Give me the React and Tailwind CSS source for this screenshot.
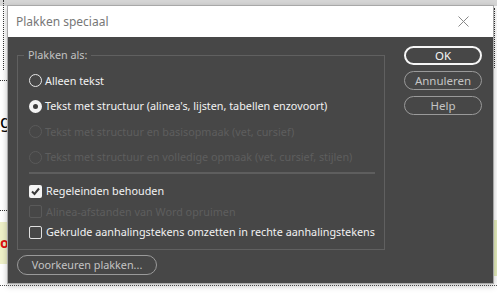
import React from 'react';

function Radio({ label, checked, disabled }) {
  return (
    <div className="flex items-center h-[25.5px] whitespace-nowrap">
      <span
        className={`w-[13px] h-[13px] rounded-full shrink-0 ${
          checked ? 'border-[4px] border-[#f4f4f4] bg-[#3c3c3c]' : disabled ? 'border border-[#5a5a5a]' : 'border-[1.5px] border-[#e8e8e8]'
        }`}
      />
      <span className={`ml-[3px] ${disabled ? 'text-[#5e5e5e]' : 'text-[#f2f2f2]'}`}>{label}</span>
    </div>
  );
}

function Check({ label, checked, disabled }) {
  return (
    <div className="flex items-center h-[20.5px] whitespace-nowrap">
      <span
        className={`w-[13px] h-[13px] rounded-[2px] shrink-0 flex items-center justify-center ${
          checked ? 'bg-[#f4f4f4]' : disabled ? 'border border-[#5a5a5a]' : 'border border-[#e0e0e0]'
        }`}
      >
        {checked && (
          <svg width="11" height="11" viewBox="0 0 11 11">
            <path d="M2 5.5 L4.5 8 L9 2.5" fill="none" stroke="#3a3a3a" strokeWidth="2" />
          </svg>
        )}
      </span>
      <span className={`ml-[4px] ${disabled ? 'text-[#5e5e5e]' : 'text-[#f2f2f2]'}`}>{label}</span>
    </div>
  );
}

function Btn({ children, primary }) {
  return (
    <div
      className={`h-[19px] w-[78px] rounded-full flex items-center justify-center text-[11.5px] leading-none ${
        primary ? 'border-2 border-[#f6f6f6] text-[#f6f6f6]' : 'border border-[#9a9a9a] text-[#c4c4c4]'
      }`}
    >
      {children}
    </div>
  );
}

export default function App() {
  return (
    <div className="relative w-[497px] h-[294px] bg-white overflow-hidden font-['Noto_Sans',sans-serif] text-[10.8px]">
      {/* background document */}
      <div className="absolute left-0 top-0 w-full h-[6px] bg-[#d6d6d6]" />
      <div className="absolute left-[3px] top-0 h-[70px] border-l border-dotted border-[#333]" />
      <div className="absolute left-0 top-[80px] w-[7px] border-t border-dotted border-[#333]" />
      <div className="absolute left-0 top-[112px] text-[18px] leading-none text-black">g</div>
      <div className="absolute left-0 top-[210px] w-[7px] border-t border-dotted border-[#333]" />
      <div className="absolute left-0 top-[222px] w-[7px] h-[42px] bg-[#eef0c8]" />
      <div className="absolute left-0 top-[236px] text-[14px] font-bold leading-none text-[#e01010]">o</div>
      <div className="absolute left-0 top-[285px] w-full border-t border-dotted border-[#555]" />
      <div className="absolute right-0 top-[220px] w-[5px] h-[56px] bg-[#e4ecbc]" />
      <div className="absolute right-[2px] top-[8px] h-[60px] border-l border-dotted border-[#333]" />

      {/* dialog */}
      <div className="absolute left-[7px] top-[5px] w-[487px] h-[279px] border border-[#a8a8a8] shadow-[0_2px_6px_rgba(0,0,0,0.25)] flex flex-col">
        <div className="h-[31px] bg-white flex items-center justify-between pl-[8px] pr-[24px] shrink-0">
          <span className="text-[12px] text-[#777]">Plakken speciaal</span>
          <svg width="11" height="11" viewBox="0 0 11 11">
            <path d="M0.5 0.5 L10.5 10.5 M10.5 0.5 L0.5 10.5" stroke="#888" strokeWidth="1" />
          </svg>
        </div>
        <div className="flex-1 bg-[#474747] flex">
          <div className="flex flex-col pl-[9px] pt-[18px] w-[377px]">
            <div className="relative border border-[#606060] h-[195px] pl-[11px] pt-[12px]">
              <span className="absolute -top-[9px] left-[6px] px-[4px] bg-[#474747] text-[#c2c2c2] leading-[16px]">Plakken als:</span>
              <Radio label="Alleen tekst" />
              <Radio label="Tekst met structuur (alinea's, lijsten, tabellen enzovoort)" checked />
              <Radio label="Tekst met structuur en basisopmaak (vet, cursief)" disabled />
              <Radio label="Tekst met structuur en volledige opmaak (vet, cursief, stijlen)" disabled />
              <div className="h-[2px] bg-[#5e5e5e] mr-[9px] mt-[2px] mb-[7px]" />
              <Check label="Regeleinden behouden" checked />
              <Check label="Alinea-afstanden van Word opruimen" disabled />
              <Check label="Gekrulde aanhalingstekens omzetten in rechte aanhalingstekens" />
            </div>
            <div className="mt-[5px] h-[20px] w-[140px] rounded-full border border-[#9a9a9a] text-[#c4c4c4] flex items-center justify-center">
              Voorkeuren plakken...
            </div>
          </div>
          <div className="flex flex-col gap-[6px] pt-[9px] pl-[19px]">
            <Btn primary>OK</Btn>
            <Btn>Annuleren</Btn>
            <Btn>Help</Btn>
          </div>
        </div>
      </div>
    </div>
  );
}
